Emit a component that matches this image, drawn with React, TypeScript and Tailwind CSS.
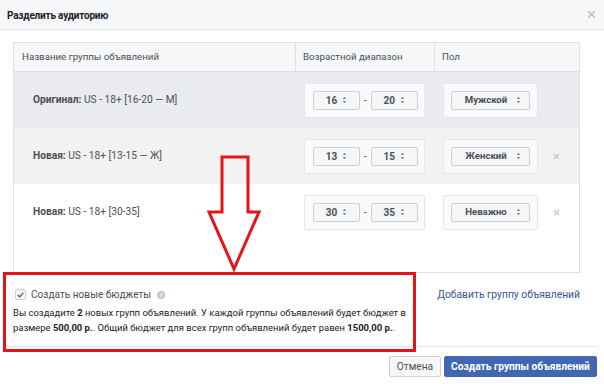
import React from 'react';

const rows = [
  { label: 'Оригинал', name: 'US - 18+ [16-20 — M]', from: '16', to: '20', gender: 'Мужской', bg: 'bg-[#e9ebee]', removable: false },
  { label: 'Новая', name: 'US - 18+ [13-15 — Ж]', from: '13', to: '15', gender: 'Женский', bg: 'bg-[#f2f2f2]', removable: true },
  { label: 'Новая', name: 'US - 18+ [30-35]', from: '30', to: '35', gender: 'Неважно', bg: 'bg-white', removable: true },
];

function Caret() {
  return (
    <svg width="5" height="8" viewBox="0 0 5 8" className="shrink-0">
      <path d="M2.5 0.8 L4.3 3 L0.7 3 Z" fill="#7f8591" />
      <path d="M0.7 5 L4.3 5 L2.5 7.2 Z" fill="#7f8591" />
    </svg>
  );
}

function Cross({ size = 8, color = '#bec3c9' }: { size?: number; color?: string }) {
  return (
    <svg width={size} height={size} viewBox="0 0 8 8">
      <path d="M1 1 L7 7 M7 1 L1 7" stroke={color} strokeWidth="1.4" />
    </svg>
  );
}

function SmallSelect({ value, wide }: { value: string; wide?: boolean }) {
  return (
    <div
      className={
        wide
          ? 'w-[79px] h-[19px] flex items-center justify-center gap-[9px] pl-[5px] bg-[#f5f6f7] border border-[#ccd0d5] rounded-[2px] text-[9.6px] font-bold text-[#4b4f56]'
          : 'w-[47px] h-[19px] flex items-center justify-center gap-[5px] bg-[#f5f6f7] border border-[#ccd0d5] rounded-[2px] text-[10px] font-bold text-[#4b4f56]'
      }
    >
      <span>{value}</span>
      <Caret />
    </div>
  );
}

export default function App() {
  return (
    <div className="relative w-[604px] h-[384px] overflow-hidden bg-white font-['Roboto','Liberation_Sans',Arial,sans-serif] text-[#4b4f56]">
      {/* Header */}
      <div className="h-[30px] flex items-center justify-between pl-[7px] pr-[8px] bg-[#f6f7f9] border-b border-[#e5e5e5]">
        <span className="text-[10px] tracking-[-0.2px] font-bold text-[#1d2129] scale-y-[1.15]">Разделить аудиторию</span>
        <Cross size={9} />
      </div>

      {/* Table */}
      <div className="pt-[12px] px-[13px]">
        <div className="w-[567px] border border-[#dddfe2]">
          <div className="h-[29px] flex text-[9.7px] bg-[#f6f7f9] border-b border-[#dddfe2]">
            <div className="w-[282px] flex items-center pl-[8px] border-r border-[#dddfe2]">Название группы объявлений</div>
            <div className="w-[139px] flex items-center pl-[7px] border-r border-[#dddfe2]">Возрастной диапазон</div>
            <div className="flex-1 flex items-center pl-[7px]">Пол</div>
          </div>

          {rows.map((r, i) => (
            <div key={i} className={`h-[56px] flex items-center ${r.bg}`}>
              <div className="w-[282px] pl-[19px] text-[10.2px]">
                <span className="font-bold">{r.label}:</span> {r.name}
              </div>
              <div className="w-[139px] pl-[8px]">
                <div className="w-[121px] h-[35px] flex items-center pl-[8px] gap-[4px] bg-[#f9fafb] border border-[#e5e6e9] rounded-[2px]">
                  <SmallSelect value={r.from} />
                  <span className="text-[10px]">-</span>
                  <SmallSelect value={r.to} />
                </div>
              </div>
              <div className="pl-[8px]">
                <div className="w-[95px] h-[35px] flex items-center pl-[7px] bg-[#f9fafb] border border-[#e5e6e9] rounded-[2px]">
                  <SmallSelect value={r.gender} wide />
                </div>
              </div>
              {r.removable && (
                <div className="ml-[15px]">
                  <Cross size={7} />
                </div>
              )}
            </div>
          ))}
          <div className="h-[32px]" />
        </div>
      </div>

      {/* Budget */}
      <div className="pl-[13px] pr-[24px]">
        <div className="mt-[15px] h-[13px] flex items-center justify-between">
          <div className="flex items-center">
            <div className="ml-[2px] w-[11px] h-[11px] flex items-center justify-center bg-[#f5f6f7] border border-[#ccd0d5] rounded-[2px]">
              <svg width="7" height="6" viewBox="0 0 7 6">
                <path d="M0.8 3 L2.7 4.8 L6.2 0.9" stroke="#4b4f56" strokeWidth="1.2" fill="none" />
              </svg>
            </div>
            <span className="ml-[5px] text-[10.1px]">Создать новые бюджеты</span>
            <span className="ml-[6px] w-[8px] h-[8px] rounded-full bg-[#c4c8cf] flex items-center justify-center text-[6px] font-bold text-white">i</span>
          </div>
          <span className="text-[10.3px] text-[#365899]">Добавить группу объявлений</span>
        </div>
        <p className="mt-[4px] text-[9.45px] leading-[15px] text-[#1d2129]">
          Вы создадите <b>2</b> новых групп объявлений. У каждой группы объявлений будет бюджет в
          <br />
          размере <b>500,00 р.</b>. Общий бюджет для всех групп объявлений будет равен <b>1500,00 р.</b>.
        </p>
      </div>

      {/* Footer */}
      <div className="mt-[11px] mx-[7px] border-t border-[#e5e5e5] pt-[9px] flex justify-end gap-[3px]">
        <button className="w-[52px] h-[21px] text-[10.2px] bg-[#f6f7f9] border border-[#ced0d4] rounded-[2px] text-[#4b4f56]">
          Отмена
        </button>
        <button className="w-[153px] h-[21px] text-[10.2px] font-bold bg-[#4267b2] border border-[#4267b2] rounded-[2px] text-white">
          Создать группы объявлений
        </button>
      </div>

      {/* Annotation: red box and arrow */}
      <div className="absolute left-[3px] top-[272px] w-[413px] h-[80px] border-[3px] border-[#e4141c]" />
      <svg className="absolute left-0 top-0 pointer-events-none" width="604" height="384">
        <polygon
          points="222,157 248,157 248,212 259,212 234,269 209,212 222,212"
          fill="none"
          stroke="#e4141c"
          strokeWidth="3"
          strokeLinejoin="miter"
        />
      </svg>
    </div>
  );
}
